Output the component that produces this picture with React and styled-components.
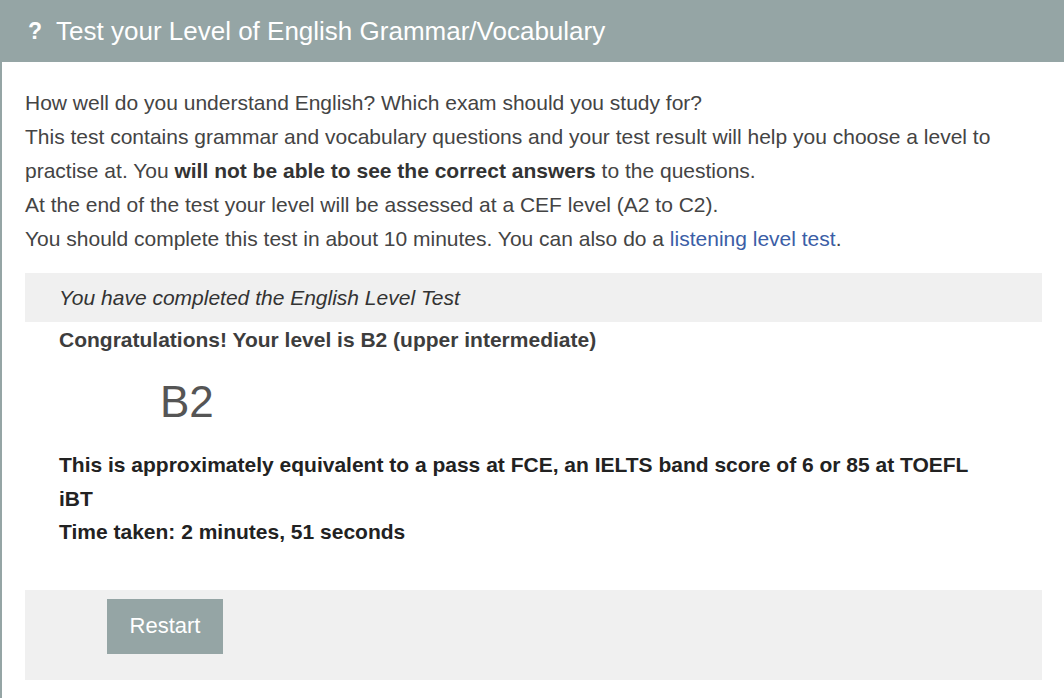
import React from "react";
import styled, { createGlobalStyle } from "styled-components";

const GlobalStyle = createGlobalStyle`
  html, body {
    margin: 0;
    padding: 0;
    background: #fff;
  }
  body {
    font-family: "Liberation Sans", Arial, sans-serif;
    color: #3d3d3d;
  }
`;

function App() {
  return (
    <>
      <GlobalStyle />
      <Panel>
        <Header>
          <Mark>?</Mark>
          <Title>Test your Level of English Grammar/Vocabulary</Title>
        </Header>
        <Body>
          <Intro>
            How well do you understand English? Which exam should you study for?
            <br />
            This test contains grammar and vocabulary questions and your test
            result will help you choose a level to practise at. You{" "}
            <strong>will not be able to see the correct answers</strong> to the
            questions.
            <br />
            At the end of the test your level will be assessed at a CEF level (A2
            to C2).
            <br />
            You should complete this test in about 10 minutes. You can also do a{" "}
            <Link href="#">listening level test</Link>.
          </Intro>
          <Notice>You have completed the English Level Test</Notice>
          <Result>
            <Congrats>Congratulations! Your level is B2 (upper intermediate)</Congrats>
            <Level>B2</Level>
            <Summary>
              This is approximately equivalent to a pass at FCE, an IELTS band
              score of 6 or 85 at TOEFL iBT
              <br />
              Time taken: 2 minutes, 51 seconds
            </Summary>
          </Result>
          <Actions>
            <RestartBtn>Restart</RestartBtn>
          </Actions>
        </Body>
      </Panel>
    </>
  );
}

const Panel = styled.div`
  min-height: 698px;
  border-left: 2px solid #95a5a5;
  box-sizing: border-box;
`;
const Header = styled.div`
  height: 62px;
  background-color: #95a5a5;
  display: flex;
  align-items: center;
  padding-left: 26px;
  color: #fff;
`;
const Mark = styled.span`
  font-size: 23px;
  font-weight: bold;
  margin-right: 14px;
`;
const Title = styled.h1`
  margin: 0;
  font-size: 26px;
  font-weight: normal;
`;
const Body = styled.div`
  padding: 24px 22px 18px 23px;
`;
const Intro = styled.p`
  margin: 0 0 17px;
  font-size: 21px;
  line-height: 34px;
  color: #444;
  & strong {
    color: #333;
  }
`;
const Link = styled.a`
  color: #3b5ea6;
  text-decoration: none;
`;
const Notice = styled.div`
  background: #f0f0f0;
  height: 49px;
  display: flex;
  align-items: center;
  padding-left: 34px;
  font-style: italic;
  font-size: 21px;
  color: #333;
`;
const Result = styled.div`
  padding: 0 34px 41px;
`;
const Congrats = styled.div`
  font-weight: bold;
  font-size: 21px;
  line-height: 36px;
  color: #3d3d3d;
`;
const Level = styled.div`
  font-size: 44px;
  line-height: 60px;
  padding: 14px 0 16px 101px;
  color: #555;
`;
const Summary = styled.div`
  font-weight: bold;
  font-size: 21px;
  line-height: 33.5px;
  color: #222;
  max-width: 930px;
`;
const Actions = styled.div`
  background: #f0f0f0;
  height: 90px;
  padding: 9px 0 0 82px;
  box-sizing: border-box;
`;
const RestartBtn = styled.button`
  width: 116px;
  height: 55px;
  border: none;
  background: #95a5a5;
  color: #fff;
  font-family: "Liberation Sans", Arial, sans-serif;
  font-size: 22px;
  cursor: pointer;
`;

export default App;
